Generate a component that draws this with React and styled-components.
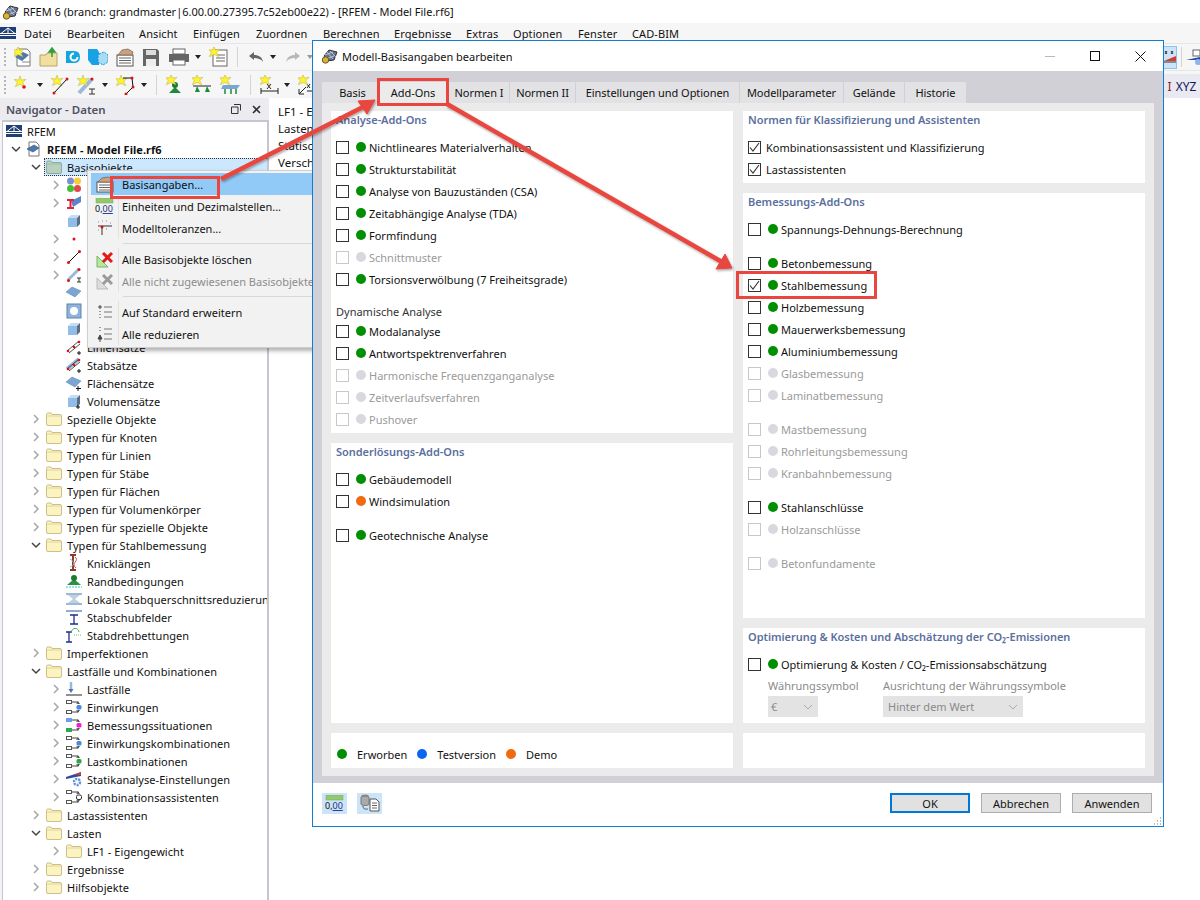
import React from "react";
import styled, { createGlobalStyle, css } from "styled-components";

const UI_FONT = `"Noto Sans", "Open Sans", "Liberation Sans", sans-serif`;
const RED = "#e8463f";

const Global = createGlobalStyle`
  html, body { margin: 0; padding: 0; background: #fff; }
  body { font-family: ${UI_FONT}; font-size: 11px; color: #111; }
  * { box-sizing: border-box; }
`;

const Desktop = styled.div`
  position: relative;
  width: 1200px;
  height: 900px;
  overflow: hidden;
  background: #fff;
`;

/* main window */
const TitleBar = styled.div`
  height: 23px;
  display: flex;
  align-items: center;
  gap: 3px;
  padding-left: 2px;
  font-size: 11px;
  background: #fff;
`;
const MenuBar = styled.div`
  height: 20px;
  display: flex;
  align-items: center;
  gap: 8px;
  background: #f6f6f6;
`;
const MenuEntries = styled.div`
  display: flex;
`;
const MenuEntry = styled.span`
  width: ${(p) => p.$w}px;
  flex: none;
  letter-spacing: 0.1px;
`;
const ToolRow = styled.div`
  height: ${(p) => p.$h}px;
  display: flex;
  align-items: center;
  gap: 8px;
  padding-left: 4px;
  background: #f6f6f6;
  border-top: 1px solid #e6e6e6;
`;
const Grip = styled.span`
  width: 2px;
  height: 18px;
  border-left: 2px dotted #b5b5b5;
`;
const ToolSep = styled.span`
  width: 1px;
  height: 20px;
  margin: 0 1px;
  background: #d4d4d4;
`;
const Caret = styled.span`
  width: 0;
  height: 0;
  margin-left: -3px;
  border-left: 3.5px solid transparent;
  border-right: 3.5px solid transparent;
  border-top: 4px solid ${(p) => (p.$off ? "#999" : "#222")};
`;
const RightTools = styled.div`
  margin-left: auto;
  display: flex;
  align-items: center;
  gap: 3px;
`;
const ActiveTool = styled.span`
  width: 13px;
  height: 23px;
  display: flex;
  align-items: center;
  justify-content: flex-end;
  background: #cce4f7;
  border: 1px solid #8cc4ee;
  border-left: 0;
`;
const XyzLabel = styled.span`
  margin-left: auto;
  align-self: flex-end;
  width: 36px;
  height: 24px;
  display: flex;
  align-items: center;
  justify-content: center;
  gap: 4px;
  font-size: 12px;
  color: #14145a;
  background: #e9e9f1;
`;
const XyzMark = styled.span`
  color: #8a1f2a;
`;
const Body = styled.div`
  display: flex;
  height: 802px;
`;
const Navigator = styled.div`
  width: 269px;
  flex: none;
  background: #f3f3f5;
  display: flex;
  flex-direction: column;
`;
const NavHead = styled.div`
  height: 22px;
  display: flex;
  align-items: center;
  padding: 0 8px 0 6px;
  font-weight: 600;
  font-size: 11.5px;
  color: #4d5160;
  background: #ececf0;
`;
const NavButtons = styled.div`
  margin-left: auto;
  display: flex;
  gap: 11px;
  align-items: center;
`;
const Tree = styled.div`
  flex: 1;
  background: #fff;
  margin-left: 2px;
  border: 2px solid #c6c6d0;
  border-width: 2px 2px 0 1px;
  overflow: hidden;
`;
const TreeRow = styled.div`
  position: relative;
  height: 18px;
  display: flex;
  align-items: center;
  white-space: nowrap;
  padding-left: ${(p) => (p.$level === 0 ? 3 : 3 + 20 * (p.$level - 1))}px;
  font-weight: ${(p) => (p.$bold ? 700 : 400)};
`;
const SelectBand = styled.span`
  position: absolute;
  top: 0;
  bottom: 0;
  left: 41px;
  right: 0;
  background: #cce8ff;
  border: 1px dotted #333;
  border-right: 0;
`;
const Expander = styled.span`
  width: 20px;
  flex: none;
  display: flex;
  justify-content: center;
  position: relative;
`;
const RowIcon = styled.span`
  width: 16px;
  height: 16px;
  flex: none;
  position: relative;
  display: flex;
  align-items: center;
  justify-content: center;
  margin-right: 5px;
`;
const RowText = styled.span`
  position: relative;
  letter-spacing: 0.05px;
`;
const SidePane = styled.div`
  flex: 1;
  margin-left: 3px;
  padding: 5px 0 0 6px;
  background: #fff;
  line-height: 17px;
  font-size: 11.5px;
`;

/* context menu */
const ContextMenu = styled.div`
  position: absolute;
  left: 87px;
  top: 170px;
  width: 240px;
  height: 178px;
  padding: 2px 0 0 3px;
  background: #f2f2f2;
  border: 1px solid #cfcfcf;
  box-shadow: 3px 3px 4px rgba(0, 0, 0, 0.3);
`;
const MenuRow = styled.div`
  height: 22px;
  display: flex;
  align-items: center;
  background: ${(p) => (p.$active ? "#91c9f7" : "transparent")};
  color: ${(p) => (p.$off ? "#8c8c8c" : "#111")};
  white-space: nowrap;
`;
const MenuGutter = styled.span`
  width: 28px;
  height: 100%;
  flex: none;
  display: flex;
  align-items: center;
  justify-content: center;
  border-right: 1px solid ${(p) => (p.$active ? "transparent" : "#e2e2e2")};
`;
const MenuLabel = styled.span`
  position: relative;
  margin-left: 3px;
  ${(p) =>
    p.$marked &&
    css`
      &::after {
        content: "";
        position: absolute;
        left: -12px;
        right: -17px;
        top: -1px;
        bottom: -7px;
        border: 3px solid ${RED};
      }
    `}
`;
const MenuDivider = styled.div`
  height: 9px;
  display: flex;
  align-items: center;
  padding-left: 32px;
  &::after {
    content: "";
    flex: 1;
    height: 1px;
    background: #d8d8d8;
  }
`;

/* dialog */
const Dialog = styled.div`
  position: absolute;
  left: 312px;
  top: 40px;
  width: 852px;
  height: 787px;
  background: #fff;
  border: 1px solid #0f7fd6;
  display: flex;
  flex-direction: column;
`;
const DialogTitle = styled.div`
  height: 30px;
  flex: none;
  display: flex;
  align-items: center;
  padding-left: 8px;
  gap: 3px;
  font-size: 11px;
`;
const WindowButtons = styled.div`
  margin-left: auto;
  display: flex;
  align-items: center;
  gap: 35px;
  padding-right: 17px;
`;
const DialogBody = styled.div`
  height: 712px;
  flex: none;
  padding: 11px 9px 7px;
  background: #d0d0d6;
  display: flex;
  flex-direction: column;
`;
const Tabs = styled.div`
  height: 21px;
  flex: none;
  display: flex;
  gap: 1px;
`;
const Tab = styled.div`
  position: relative;
  width: ${(p) => p.$w}px;
  padding-left: ${(p) => p.$pad || 0}px;
  display: flex;
  align-items: center;
  justify-content: center;
  background: ${(p) => (p.$active ? "#ebebeb" : "#e2e2e4")};
  letter-spacing: -0.05px;
  ${(p) =>
    p.$marked &&
    css`
      &::after {
        content: "";
        position: absolute;
        inset: -4px -1px -3px -1px;
        border: 3px solid ${RED};
      }
    `}
`;
const Panel = styled.div`
  flex: 1;
  background: #ebebeb;
  padding: 8px 9px;
  display: flex;
  gap: 10px;
`;
const Column = styled.div`
  width: 402px;
  display: flex;
  flex-direction: column;
  gap: 10px;
`;
const Card = styled.div`
  height: ${(p) => p.$h}px;
  flex: none;
  background: #fff;
  padding: 1px 5px 0;
`;
const CardTitle = styled.div`
  height: 15px;
  line-height: 15px;
  font-weight: 600;
  color: #5b6f9e;
  margin-bottom: ${(p) => p.$after ?? 9}px;
  letter-spacing: -0.03px;
`;
const SubTitle = styled.div`
  height: 17px;
  margin-top: 13px;
  line-height: 17px;
  color: #333;
  font-size: 11px;
`;
const CheckRow = styled.div`
  position: relative;
  height: 22px;
  width: fit-content;
  margin-top: ${(p) => p.$gap || 0}px;
  display: flex;
  align-items: center;
  white-space: nowrap;
  color: ${(p) => (p.$off ? "#9a9a9a" : "#111")};
  ${(p) =>
    p.$marked &&
    css`
      &::after {
        content: "";
        position: absolute;
        left: -12px;
        right: -10px;
        top: -3px;
        bottom: -3px;
        border: 3px solid ${RED};
      }
    `}
`;
const Box = styled.span`
  width: 13px;
  height: 13px;
  flex: none;
  margin-right: ${(p) => (p.$plain ? 5 : 7)}px;
  border: 1px solid ${(p) => (p.$off ? "#c8c8c8" : "#333")};
  background: #fff;
  display: flex;
  align-items: center;
  justify-content: center;
`;
const Dot = styled.span`
  width: 10px;
  height: 10px;
  flex: none;
  margin-right: ${(p) => p.$after ?? 3}px;
  border-radius: 50%;
  background: ${(p) => p.$color};
`;
const LegendRow = styled.div`
  height: 34px;
  padding: 6px 0 0 1px;
  display: flex;
  align-items: center;
`;
const LegendItem = styled.span`
  margin-right: 10px;
`;
const FieldGrid = styled.div`
  display: flex;
  gap: 65px;
  padding-left: 20px;
  color: #8a8a8a;
`;
const Field = styled.div`
  width: ${(p) => p.$w}px;
`;
const FieldLabel = styled.div`
  height: 21px;
  line-height: 21px;
  white-space: nowrap;
`;
const FakeSelect = styled.div`
  height: 21px;
  display: flex;
  align-items: center;
  justify-content: space-between;
  padding: 0 5px 0 ${(p) => p.$pad || 5}px;
  background: #e3e3e3;
`;
const DialogFooter = styled.div`
  flex: 1;
  position: relative;
  display: flex;
  align-items: center;
  padding: 0 11px 3px 9px;
`;
const FooterTool = styled.span`
  width: 25px;
  height: 21px;
  margin-right: 10px;
  display: flex;
  align-items: center;
  justify-content: center;
  background: #cce4f7;
`;
const FooterActions = styled.div`
  margin-left: auto;
  display: flex;
  gap: 11px;
`;
const Button = styled.div`
  width: 80px;
  height: 20px;
  display: flex;
  align-items: center;
  justify-content: center;
  background: #e1e1e1;
  border: ${(p) => (p.$primary ? "2px solid #0078d7" : "1px solid #adadad")};
`;
const ResizeGrip = styled.svg`
  position: absolute;
  right: 1px;
  bottom: 0;
`;
const ArrowLayer = styled.svg`
  position: absolute;
  inset: 0;
  pointer-events: none;
`;

/* ---- icons ---- */
const Folder = ({ tint }) => (
  <svg width="16" height="14" viewBox="0 0 16 14">
    <path d="M.5 2.500Q.5 1 2 1h3l1 1.500h8q1.500 0 1.500 1.500v8q0 1.500-1.500 1.500H2Q.5 13.500.5 12z" fill={tint ? "#b7d0c0" : "#fbf3c0"} stroke={tint ? "#8fac9b" : "#cdbf85"} />
    <path d="M.8 4h14.400" stroke={tint ? "#9fbcaa" : "#e0d49e"} />
  </svg>
);
const Chevron = ({ open }) => (
  <svg width="10" height="10" viewBox="0 0 10 10">
    <path d={open ? "M1 3l4 4 4-4" : "M3 1l4 4-4 4"} fill="none" stroke={open ? "#444" : "#a6a6a6"} strokeWidth="1.500" />
  </svg>
);
const Star = ({ x = 4, y = 4 }) => (
  <path transform={`translate(${x} ${y}) scale(1.35)`} d="M0-4.500L1-1.400 4.500-2 2 .4 3.500 3.500 0 1.800-3.500 3.500-2 .4-4.500-2-1-1.400z" fill="#fff22e" stroke="#b9b45a" strokeWidth=".4" />
);
const LogoGrid = () => (
  <svg width="18" height="18" viewBox="0 0 18 18">
    <path d="M3 9l5-6 8 2-3 8-7 1z" fill="#66738c" stroke="#333" />
    <path d="M6 5l6 7M9 4l6 6M4 8l8-3M5 12l8-3" stroke="#c8d4e8" strokeWidth=".8" />
    <circle cx="4.500" cy="13" r="3.200" fill="#d9b23a" stroke="#6c5a16" />
  </svg>
);
const NavFlag = () => (
  <svg width="16" height="12" viewBox="0 0 16 12">
    <rect width="16" height="12" fill="#1f3f77" />
    <path d="M0 6.500h16M8 1L1 6.500M8 1l7 5.500M8 1v5.500" stroke="#fff" strokeWidth="1" fill="none" />
    <rect y="8" width="16" height="1" fill="#fff" />
  </svg>
);
const ModelFile = () => (
  <svg width="16" height="16" viewBox="0 0 16 16">
    <path d="M3 1h7l3 3v11H3z" fill="#fff" stroke="#777" />
    <path d="M1 8l7-4 5 3-6 4z" fill="#4b78ad" stroke="#2d4d77" strokeWidth=".6" />
  </svg>
);
const Colors = () => (
  <svg width="16" height="16" viewBox="0 0 16 16">
    <circle cx="4.500" cy="4" r="3.500" fill="#7f8ed0" />
    <circle cx="11.500" cy="4" r="3.500" fill="#f2cf3a" />
    <circle cx="4.500" cy="11.500" r="3.500" fill="#43c02f" />
    <circle cx="11.500" cy="11.500" r="3.500" fill="#e0484b" />
  </svg>
);
const Beam = () => (
  <svg width="16" height="16" viewBox="0 0 16 16">
    <path d="M5 6l10-5v6L7 12z" fill="#5b86c6" />
    <path d="M1 5h7M1 13h7M4.500 5v8" stroke="#e0243a" strokeWidth="2" />
  </svg>
);
const Block = ({ plus }) => (
  <svg width="16" height="16" viewBox="0 0 16 16">
    <path d="M2 5h9v9H2z" fill="#8fbce8" />
    <path d="M2 5l3-3h9l-3 3z" fill="#c5dcf3" />
    <path d="M11 5l3-3v9l-3 3z" fill="#5e6e82" />
    {plus && <path d="M12 12v4M10 14h4" stroke="#111" />}
  </svg>
);
const Slab = ({ plus }) => (
  <svg width="16" height="16" viewBox="0 0 16 16">
    <path d="M0 7l6-5 9 4-6 6z" fill="#7aa6d4" stroke="#5c7fa6" strokeWidth=".5" />
    {plus && <path d="M12 11v5M10 13.500h5" stroke="#111" />}
  </svg>
);
const Node = () => (
  <svg width="16" height="16"><circle cx="8" cy="8" r="1.500" fill="#d11" /></svg>
);
const LineIcon = () => (
  <svg width="16" height="16"><path d="M2 14L14 2" stroke="#111" /><circle cx="2.500" cy="13.500" r="1.500" fill="#d11" /><circle cx="13.500" cy="2.500" r="1.500" fill="#d11" /></svg>
);
const MemberIcon = () => (
  <svg width="16" height="16"><path d="M2 13L13 2" stroke="#9bb9dd" strokeWidth="3" /><circle cx="2.500" cy="13.500" r="1.500" fill="#d11" /><circle cx="13" cy="2.500" r="1.500" fill="#d11" /><path d="M11 11h4M13 11v4M11 15h4" stroke="#333" /></svg>
);
const Opening = () => (
  <svg width="16" height="16"><rect x="1" y="1" width="14" height="14" fill="#8fb3dc" stroke="#5d82ad" /><circle cx="8" cy="8" r="4" fill="#fff" /></svg>
);
const LineSet = ({ member }) => (
  <svg width="16" height="16">
    {member && <path d="M1 12L13 2" stroke="#9bb9dd" strokeWidth="4" />}
    <path d="M1 12L13 2M3 14L14 5" stroke="#222" strokeWidth=".8" />
    <circle cx="2" cy="12" r="1.300" fill="#d11" /><circle cx="8" cy="8" r="1.300" fill="#d11" /><circle cx="13" cy="3" r="1.300" fill="#d11" />
    <path d="M13 12v4M11 14h4" stroke="#111" />
  </svg>
);
const Buckling = () => (
  <svg width="16" height="18" viewBox="0 0 16 18"><path d="M4 1h6M4 16h6M7 1v15" stroke="#8c3b2e" strokeWidth="2" /><path d="M9 3c5 4-5 6 1 11" stroke="#e04a3a" fill="none" /><path d="M4 5c5 3 5 6 0 8" stroke="#7fb4df" fill="none" /></svg>
);
const Support = () => (
  <svg width="16" height="16"><path d="M1 12l7-6 7 6z" fill="#2f8f43" /><circle cx="8" cy="5" r="3" fill="#1c7a33" /><path d="M0 14h16" stroke="#29c9c9" strokeDasharray="2 1" /></svg>
);
const Reduction = () => (
  <svg width="16" height="14"><rect y="1" width="16" height="2" fill="#9fb9d4" /><rect y="11" width="16" height="2" fill="#9fb9d4" /><path d="M2 3h12L9 7l5 4H2l5-4z" fill="#bcd0e4" /></svg>
);
const ShearPanel = () => (
  <svg width="16" height="16"><path d="M0 2h16" stroke="#93aacb" strokeWidth="2" /><path d="M4 6h8M8 6v9M4 15h8" stroke="#1b2f8a" strokeWidth="1.300" /></svg>
);
const Rotary = () => (
  <svg width="16" height="16"><path d="M0 5h6M3 5v10M0 15h6" stroke="#1b2f8a" strokeWidth="1.300" /><path d="M5 6c1-6 7-6 8-1" stroke="#4da852" fill="none" /><path d="M8 8h8" stroke="#7ac27d" strokeDasharray="1 1" /></svg>
);
const LoadCase = () => (
  <svg width="16" height="16"><path d="M5 1v8" stroke="#9ab8db" strokeWidth="2.500" /><path d="M2.500 8h5L5 12z" fill="#4a74b0" /><path d="M0 14h16" stroke="#222" /></svg>
);
const Combo = ({ c1 = "#fff", c2 = "#fff", c3 = "#4d86dd" }) => (
  <svg width="16" height="16">
    <rect x=".5" y="1.500" width="5" height="3" fill={c1} stroke={c1 === "#fff" ? "#555" : c1} />
    <rect x=".5" y="11.500" width="5" height="3" fill={c2} stroke={c2 === "#fff" ? "#555" : c2} />
    <path d="M6 3h6l1 2M6 13h6l1-2" stroke="#444" fill="none" />
    <path d="M10 5l4 0-2-3zM10 11l4 0-2 3z" fill="#444" opacity=".7" />
    <rect x="10.500" y="6" width="5" height="4.500" rx="1.500" fill={c3} stroke={c3 === "#fff" ? "#333" : "none"} />
  </svg>
);
const Analysis = () => (
  <svg width="16" height="16"><path d="M0 6l15-5v4L0 8z" fill="#2b4aa0" /><path d="M8 4l7-3v3z" fill="#d93a2f" /><circle cx="11" cy="11" r="3" fill="none" stroke="#5f8fe0" strokeWidth="2.500" strokeDasharray="2 1" /></svg>
);
const Ruler = () => (
  <svg width="19" height="16" viewBox="0 0 19 16">
    <rect x="1" y="0" width="17" height="5" fill="#92c96e" stroke="#7aa85a" strokeWidth=".5" />
    <text x="0" y="14" fontSize="9" fontFamily={UI_FONT} fill="#111">0,<tspan fill="#1b2f8a" textDecoration="underline">00</tspan></text>
  </svg>
);
const Clipboard = () => (
  <svg width="18" height="17" viewBox="0 0 18 17">
    <rect x="1" y="6" width="16" height="10" fill="#fff" stroke="#555" />
    <path d="M3 9h12M3 11.500h12M3 14h12" stroke="#666" />
    <path d="M2 6l4-4 6-1 4 2-1 3z" fill="#c9a182" stroke="#7a5c45" strokeWidth=".7" />
  </svg>
);
const Tolerance = () => (
  <svg width="16" height="16"><path d="M5 15V6M1 6h14" stroke="#333" /><circle cx="5" cy="7" r="1.500" fill="#d11" /><path d="M1 2h1M5 1h1M9 1h1M13 3h1M1 10h1M9 9h1" stroke="#888" /></svg>
);
const DeleteIcon = ({ off }) => (
  <svg width="17" height="17"><path d="M1 16V5l11 11z" fill={off ? "#dcdcdc" : "#b7e8a0"} stroke={off ? "#bbb" : "#79b45f"} /><path d="M7 2l9 9M16 2l-9 9" stroke={off ? "#9a9a9a" : "#e01919"} strokeWidth="3" /></svg>
);
const ExpandIcon = ({ down }) => (
  <svg width="16" height="16">
    <path d="M7 3h8M7 8h8M7 13h8" stroke="#777" />
    {down ? <path d="M3 1v1M3 4v1M1 13L3 9l2 4zM3 13v3" stroke="#444" fill="#444" /> : <path d="M3 1v4M1 3h4M3 7v1M3 10v1M3 13v1" stroke="#444" />}
  </svg>
);
const DbCopy = () => (
  <svg width="20" height="18" viewBox="0 0 20 18">
    <ellipse cx="5" cy="2.500" rx="4" ry="2" fill="#888" />
    <path d="M1 3v7c0 2 8 2 8 0V3" fill="#aaa" stroke="#777" />
    <path d="M3 12c0 4 3 3 5 3" stroke="#555" fill="none" />
    <path d="M10 5h6l3 3v9h-9z" fill="#fff" stroke="#555" />
    <path d="M12 9h5M12 11.500h5M12 14h5" stroke="#666" />
  </svg>
);

/* toolbar glyphs */
const ToolNew = () => (<svg width="17" height="20"><path d="M3 2h10l3 3v14H3z" fill="#fff" stroke="#777" /><path d="M1 10l8-5 6 3-7 6z" fill="#4b78ad" /><path d="M8 15h8" stroke="#888" /><Star x={4} y={5} /></svg>);
const ToolOpen = () => (<svg width="19" height="20"><path d="M1 8h6l1-2h10v13H1z" fill="#f0df9e" stroke="#b9a566" /><path d="M13 10V3M10 5l3-4 3 4z" fill="#2f9e3f" stroke="#2f9e3f" strokeWidth="1.500" /></svg>);
const ToolC = () => (<svg width="14" height="20"><path d="M0 4h8q6 0 6 6t-6 6H0z" fill="#12a5e0" /><circle cx="8" cy="10" r="3.500" fill="none" stroke="#fff" strokeWidth="2" strokeDasharray="16 6" /></svg>);
const ToolCube = () => (<svg width="20" height="20"><path d="M0 2h9l2 3v13H4l-4-5z" fill="#19a1e5" /><path d="M11 7l5-2 4 3v7l-5 3-5-3V9z" fill="#a8dcf5" stroke="#1691d4" strokeDasharray="2 1" /></svg>);
const ToolHand = () => (<svg width="18" height="20"><rect x="1" y="8" width="16" height="11" fill="#fff" stroke="#555" /><path d="M3 11h12M3 13.500h12M3 16h12" stroke="#666" /><path d="M2 8l4-5 6-1 5 3-1 3z" fill="#c9a182" stroke="#7a5c45" strokeWidth=".7" /></svg>);
const ToolSave = () => (<svg width="18" height="20"><path d="M1 2h14l2 2v15H1z" fill="#666" /><rect x="4" y="3" width="10" height="5" fill="#ddd" /><rect x="4" y="12" width="10" height="7" fill="#eee" /></svg>);
const ToolPrint = () => (<svg width="22" height="20"><rect x="5" y="2" width="12" height="5" fill="#fff" stroke="#666" /><rect x="1" y="7" width="20" height="8" fill="#666" /><rect x="5" y="13" width="12" height="5" fill="#fff" stroke="#666" /></svg>);
const ToolReport = () => (<svg width="19" height="20"><rect x="4" y="3" width="14" height="16" fill="#fff" stroke="#666" /><path d="M7 8h9M7 11h9M7 14h9" stroke="#666" /><Star x={5} y={5} /></svg>);
const ToolUndo = ({ off }) => (<svg width="18" height="20"><path d="M2 9l5-4v3c5 0 8 2 9 7-2-3-5-4-9-4v2z" fill={off ? "#b8b8b8" : "#666"} transform={off ? "matrix(-1 0 0 1 18 0)" : undefined} /></svg>);
const StarDot = () => (<svg width="18" height="20"><Star x={6} y={7} /><circle cx="10" cy="12" r="1.800" fill="#d11" /></svg>);
const StarLine = () => (<svg width="18" height="20"><Star x={6} y={6} /><path d="M3 18L16 4" stroke="#111" /><circle cx="3" cy="18" r="1.500" fill="#d11" /><circle cx="16" cy="4" r="1.500" fill="#d11" /></svg>);
const StarMember = () => (<svg width="20" height="20"><path d="M2 18L15 4" stroke="#9bb9dd" strokeWidth="4" /><Star x={6} y={6} /><circle cx="15" cy="4" r="1.500" fill="#d11" /><path d="M12 14h6M15 14v5M12 19h6" stroke="#333" /></svg>);
const StarPoly = () => (<svg width="20" height="20"><Star x={5} y={6} /><path d="M7 3h9l1 9-7 7" stroke="#111" fill="none" /><circle cx="16" cy="3" r="1.500" fill="#d11" /><circle cx="17" cy="12" r="1.500" fill="#d11" /><circle cx="10" cy="19" r="1.500" fill="#d11" /></svg>);
const StarSupport = () => (<svg width="18" height="20"><path d="M3 18l6-6 6 6z" fill="#1c8a3a" /><circle cx="9" cy="10" r="3" fill="#1c7a33" /><Star x={5} y={5} /></svg>);
const StarHinge = () => (<svg width="20" height="20"><path d="M1 11h18" stroke="#222" /><path d="M3 17l2-6 3 6zM13 17l2-6 3 6z" fill="#1c8a3a" /><Star x={5} y={5} /></svg>);
const StarDeck = () => (<svg width="21" height="20"><path d="M3 10h17l-3 4H1z" fill="#7aa6d4" /><path d="M5 14v5M11 14v5M16 14v5" stroke="#1c8a3a" strokeWidth="1.500" /><Star x={5} y={5} /></svg>);
const StarDim = () => (<svg width="19" height="20"><path d="M1 13v6M18 13v6M1 16h17" stroke="#222" /><path d="M7 9l4 5M11 9l-4 5" stroke="#222" /><Star x={5} y={5} /></svg>);
const StarDimXX = () => (<svg width="19" height="20"><path d="M1 19L8 12M1 19h5M1 19v-5M9 16h9" stroke="#222" /><path d="M9 9l3 4M12 9l-3 4M15 9l3 4M18 9l-3 4" stroke="#222" /><Star x={5} y={5} /></svg>);
const ToolXxWedge = () => (<svg width="12" height="16"><path d="M1 2l2 3M3 2L1 5M7 2l2 3M9 2L7 5" stroke="#333" /><path d="M0 12l12-5v5z" fill="#d93a2f" /><path d="M0 13h12" stroke="#333" /></svg>);
const ToolGear = () => (<svg width="14" height="20"><rect x="7" y="3" width="7" height="6" fill="#fff" stroke="#666" /><path d="M0 13l14-3v3z" fill="#2b4aa0" /><circle cx="12" cy="15" r="3" fill="#8fb4ec" /></svg>);

const icons = {
  folder: <Folder />,
  folderSel: <Folder tint />,
  flag: <NavFlag />,
  model: <ModelFile />,
  colors: <Colors />,
  beam: <Beam />,
  block: <Block />,
  node: <Node />,
  line: <LineIcon />,
  member: <MemberIcon />,
  slab: <Slab />,
  opening: <Opening />,
  lineSet: <LineSet />,
  memberSet: <LineSet member />,
  slabSet: <Slab plus />,
  blockSet: <Block plus />,
  buckling: <Buckling />,
  support: <Support />,
  reduction: <Reduction />,
  shear: <ShearPanel />,
  rotary: <Rotary />,
  loadCase: <LoadCase />,
  action: <Combo />,
  design: <Combo c1="#6a9ee8" c2="#2fa84f" c3="#ee1fd1" />,
  actionCombo: <Combo />,
  loadCombo: <Combo c3="#2aa842" />,
  analysis: <Analysis />,
  wizard: <Combo c3="#fff" />,
};

const treeRows = [
  { level: 0, icon: "flag", label: "RFEM" },
  { level: 1, open: true, icon: "model", label: "RFEM - Model File.rf6", bold: true },
  { level: 2, open: true, icon: "folderSel", label: "Basisobjekte", selected: true },
  { level: 3, closed: true, icon: "colors", label: "Materialien" },
  { level: 3, closed: true, icon: "beam", label: "Querschnitte" },
  { level: 3, icon: "block", label: "Dicken" },
  { level: 3, closed: true, icon: "node", label: "Knoten" },
  { level: 3, closed: true, icon: "line", label: "Linien" },
  { level: 3, closed: true, icon: "member", label: "Stäbe" },
  { level: 3, icon: "slab", label: "Flächen" },
  { level: 3, icon: "opening", label: "Öffnungen" },
  { level: 3, icon: "block", label: "Volumenkörper" },
  { level: 3, icon: "lineSet", label: "Liniensätze" },
  { level: 3, icon: "memberSet", label: "Stabsätze" },
  { level: 3, icon: "slabSet", label: "Flächensätze" },
  { level: 3, icon: "blockSet", label: "Volumensätze" },
  { level: 2, closed: true, icon: "folder", label: "Spezielle Objekte" },
  { level: 2, closed: true, icon: "folder", label: "Typen für Knoten" },
  { level: 2, closed: true, icon: "folder", label: "Typen für Linien" },
  { level: 2, closed: true, icon: "folder", label: "Typen für Stäbe" },
  { level: 2, closed: true, icon: "folder", label: "Typen für Flächen" },
  { level: 2, closed: true, icon: "folder", label: "Typen für Volumenkörper" },
  { level: 2, closed: true, icon: "folder", label: "Typen für spezielle Objekte" },
  { level: 2, open: true, icon: "folder", label: "Typen für Stahlbemessung" },
  { level: 3, icon: "buckling", label: "Knicklängen" },
  { level: 3, icon: "support", label: "Randbedingungen" },
  { level: 3, icon: "reduction", label: "Lokale Stabquerschnittsreduzierungen" },
  { level: 3, icon: "shear", label: "Stabschubfelder" },
  { level: 3, icon: "rotary", label: "Stabdrehbettungen" },
  { level: 2, closed: true, icon: "folder", label: "Imperfektionen" },
  { level: 2, open: true, icon: "folder", label: "Lastfälle und Kombinationen" },
  { level: 3, closed: true, icon: "loadCase", label: "Lastfälle" },
  { level: 3, closed: true, icon: "action", label: "Einwirkungen" },
  { level: 3, closed: true, icon: "design", label: "Bemessungssituationen" },
  { level: 3, closed: true, icon: "actionCombo", label: "Einwirkungskombinationen" },
  { level: 3, closed: true, icon: "loadCombo", label: "Lastkombinationen" },
  { level: 3, closed: true, icon: "analysis", label: "Statikanalyse-Einstellungen" },
  { level: 3, closed: true, icon: "wizard", label: "Kombinationsassistenten" },
  { level: 2, closed: true, icon: "folder", label: "Lastassistenten" },
  { level: 2, open: true, icon: "folder", label: "Lasten" },
  { level: 3, closed: true, icon: "folder", label: "LF1 - Eigengewicht" },
  { level: 2, closed: true, icon: "folder", label: "Ergebnisse" },
  { level: 2, closed: true, icon: "folder", label: "Hilfsobjekte" },
];

const menuEntries = [
  ["Datei", 43], ["Bearbeiten", 72], ["Ansicht", 54], ["Einfügen", 63], ["Zuordnen", 67],
  ["Berechnen", 71], ["Ergebnisse", 72], ["Extras", 47], ["Optionen", 65], ["Fenster", 54], ["CAD-BIM", 60],
];

const tabs = [
  ["Basis", 55, 6], ["Add-Ons", 70], ["Normen I", 60], ["Normen II", 65], ["Einstellungen und Optionen", 163],
  ["Modellparameter", 103], ["Gelände", 60], ["Historie", 61],
];

const GREEN = "#008f00";
const CHECK = (
  <svg width="11" height="11" viewBox="0 0 11 11"><path d="M1 5.500l3 3.500 6-8" fill="none" stroke="#333" strokeWidth="1.100" /></svg>
);

const AddOn = ({ label, off, checked, gap, plain, color, marked }) => (
  <CheckRow $off={off} $gap={gap} $marked={marked}>
    <Box $off={off} $plain={plain}>{checked && CHECK}</Box>
    {!plain && <Dot $color={color || (off ? "#d8d8de" : GREEN)} />}
    <span>{label}</span>
  </CheckRow>
);

const SmallChevron = () => (
  <svg width="10" height="6" viewBox="0 0 10 6"><path d="M1 1l4 4 4-4" fill="none" stroke="#aaa" /></svg>
);

export default function App() {
  return (
    <Desktop>
      <Global />
      <TitleBar>
        <LogoGrid />
        <span>RFEM 6 (branch: grandmaster|6.00.00.27395.7c52eb00e22) - [RFEM - Model File.rf6]</span>
      </TitleBar>
      <MenuBar>
        <NavFlag />
        <MenuEntries>
          {menuEntries.map(([label, w]) => (
            <MenuEntry key={label} $w={w}>{label}</MenuEntry>
          ))}
        </MenuEntries>
      </MenuBar>
      <ToolRow $h={27}>
        <Grip />
        <ToolNew /><ToolOpen /><ToolC /><ToolCube /><ToolHand /><ToolSave /><ToolPrint /><Caret />
        <ToolReport /><ToolSep /><ToolUndo /><Caret /><ToolUndo off /><Caret $off />
        <RightTools>
          <ActiveTool><ToolXxWedge /></ActiveTool>
          <ToolSep />
          <ToolGear />
        </RightTools>
      </ToolRow>
      <ToolRow $h={28}>
        <Grip />
        <StarDot /><Caret /><StarLine /><StarMember /><Caret /><StarPoly /><Caret />
        <ToolSep /><StarSupport /><StarHinge /><StarDeck /><ToolSep /><StarDim /><Caret /><StarDimXX />
        <XyzLabel><XyzMark>I</XyzMark>XYZ</XyzLabel>
      </ToolRow>
      <Body>
        <Navigator>
          <NavHead>
            Navigator - Daten
            <NavButtons>
              <svg width="10" height="10"><path d="M3 .5h6.500v6M.5 3h6.500v6.500H.5z" fill="none" stroke="#333" /></svg>
              <svg width="9" height="9"><path d="M1 1l7 7M8 1l-7 7" stroke="#333" strokeWidth="1.600" /></svg>
            </NavButtons>
          </NavHead>
          <Tree>
            {treeRows.map((row) => (
              <TreeRow key={row.label} $level={row.level} $bold={row.bold}>
                {row.selected && <SelectBand />}
                {row.level > 0 && (
                  <Expander>
                    {row.open && <Chevron open />}
                    {row.closed && <Chevron />}
                  </Expander>
                )}
                <RowIcon>{icons[row.icon]}</RowIcon>
                <RowText>{row.label}</RowText>
              </TreeRow>
            ))}
          </Tree>
        </Navigator>
        <SidePane>
          LF1 - Eigengewicht<br />Lasten<br />Statische Analyse<br />Verschiebungen
        </SidePane>
      </Body>

      <ContextMenu>
        <MenuRow $active>
          <MenuGutter $active><Clipboard /></MenuGutter>
          <MenuLabel $marked>Basisangaben...</MenuLabel>
        </MenuRow>
        <MenuRow>
          <MenuGutter><Ruler /></MenuGutter>
          <MenuLabel>Einheiten und Dezimalstellen...</MenuLabel>
        </MenuRow>
        <MenuRow>
          <MenuGutter><Tolerance /></MenuGutter>
          <MenuLabel>Modelltoleranzen...</MenuLabel>
        </MenuRow>
        <MenuDivider />
        <MenuRow>
          <MenuGutter><DeleteIcon /></MenuGutter>
          <MenuLabel>Alle Basisobjekte löschen</MenuLabel>
        </MenuRow>
        <MenuRow $off>
          <MenuGutter><DeleteIcon off /></MenuGutter>
          <MenuLabel>Alle nicht zugewiesenen Basisobjekte löschen</MenuLabel>
        </MenuRow>
        <MenuDivider />
        <MenuRow>
          <MenuGutter><ExpandIcon /></MenuGutter>
          <MenuLabel>Auf Standard erweitern</MenuLabel>
        </MenuRow>
        <MenuRow>
          <MenuGutter><ExpandIcon down /></MenuGutter>
          <MenuLabel>Alle reduzieren</MenuLabel>
        </MenuRow>
      </ContextMenu>

      <Dialog>
        <DialogTitle>
          <LogoGrid />
          <span>Modell-Basisangaben bearbeiten</span>
          <WindowButtons>
            <svg width="10" height="10"><path d="M0 5.500h10" stroke="#bbb" /></svg>
            <svg width="10" height="10"><rect x=".5" y=".5" width="9" height="9" fill="none" stroke="#111" /></svg>
            <svg width="11" height="11"><path d="M.5.5l10 10M10.500.5l-10 10" stroke="#111" /></svg>
          </WindowButtons>
        </DialogTitle>
        <DialogBody>
          <Tabs>
            {tabs.map(([label, w, pad]) => (
              <Tab key={label} $w={w} $pad={pad} $active={label === "Add-Ons"} $marked={label === "Add-Ons"}>{label}</Tab>
            ))}
          </Tabs>
          <Panel>
            <Column>
              <Card $h={322}>
                <CardTitle>Analyse-Add-Ons</CardTitle>
                <AddOn label="Nichtlineares Materialverhalten" />
                <AddOn label="Strukturstabilität" />
                <AddOn label="Analyse von Bauzuständen (CSA)" />
                <AddOn label="Zeitabhängige Analyse (TDA)" />
                <AddOn label="Formfindung" />
                <AddOn label="Schnittmuster" off />
                <AddOn label="Torsionsverwölbung (7 Freiheitsgrade)" />
                <SubTitle>Dynamische Analyse</SubTitle>
                <AddOn label="Modalanalyse" />
                <AddOn label="Antwortspektrenverfahren" />
                <AddOn label="Harmonische Frequenzganganalyse" off />
                <AddOn label="Zeitverlaufsverfahren" off />
                <AddOn label="Pushover" off />
              </Card>
              <Card $h={280}>
                <CardTitle>Sonderlösungs-Add-Ons</CardTitle>
                <AddOn label="Gebäudemodell" />
                <AddOn label="Windsimulation" color="#f26a0f" />
                <AddOn label="Geotechnische Analyse" gap={12} />
              </Card>
              <Card $h={35}>
                <LegendRow>
                  <Dot $color={GREEN} $after={10} /><LegendItem>Erworben</LegendItem>
                  <Dot $color="#0a66f2" $after={10} /><LegendItem>Testversion</LegendItem>
                  <Dot $color="#f26a0f" $after={10} /><LegendItem>Demo</LegendItem>
                </LegendRow>
              </Card>
            </Column>
            <Column>
              <Card $h={72}>
                <CardTitle>Normen für Klassifizierung und Assistenten</CardTitle>
                <AddOn label="Kombinationsassistent und Klassifizierung" checked plain />
                <AddOn label="Lastassistenten" checked plain />
              </Card>
              <Card $h={425}>
                <CardTitle>Bemessungs-Add-Ons</CardTitle>
                <AddOn label="Spannungs-Dehnungs-Berechnung" />
                <AddOn label="Betonbemessung" gap={12} />
                <AddOn label="Stahlbemessung" checked marked />
                <AddOn label="Holzbemessung" />
                <AddOn label="Mauerwerksbemessung" />
                <AddOn label="Aluminiumbemessung" />
                <AddOn label="Glasbemessung" off />
                <AddOn label="Laminatbemessung" off />
                <AddOn label="Mastbemessung" off gap={12} />
                <AddOn label="Rohrleitungsbemessung" off />
                <AddOn label="Kranbahnbemessung" off />
                <AddOn label="Stahlanschlüsse" gap={12} />
                <AddOn label="Holzanschlüsse" off />
                <AddOn label="Betonfundamente" off gap={12} />
              </Card>
              <Card $h={95}>
                <CardTitle>Optimierung &amp; Kosten und Abschätzung der CO₂-Emissionen</CardTitle>
                <AddOn label="Optimierung & Kosten / CO₂-Emissionsabschätzung" />
                <FieldGrid>
                  <Field $w={50}>
                    <FieldLabel>Währungssymbol</FieldLabel>
                    <FakeSelect $pad={3}>€<SmallChevron /></FakeSelect>
                  </Field>
                  <Field $w={140}>
                    <FieldLabel>Ausrichtung der Währungssymbole</FieldLabel>
                    <FakeSelect>Hinter dem Wert<SmallChevron /></FakeSelect>
                  </Field>
                </FieldGrid>
              </Card>
              <Card $h={35} />
            </Column>
          </Panel>
        </DialogBody>
        <DialogFooter>
          <FooterTool><Ruler /></FooterTool>
          <FooterTool><DbCopy /></FooterTool>
          <FooterActions>
            <Button $primary>OK</Button>
            <Button>Abbrechen</Button>
            <Button>Anwenden</Button>
          </FooterActions>
          <ResizeGrip width="9" height="9" viewBox="0 0 9 9">
            <path d="M7 1h1M4 4h1M7 4h1M1 7h1M4 7h1M7 7h1" stroke="#bdbdbd" strokeWidth="2" />
          </ResizeGrip>
        </DialogFooter>
      </Dialog>

      <ArrowLayer width="1200" height="900" viewBox="0 0 1200 900">
        <defs>
          <filter id="arrowShadow" x="-10%" y="-10%" width="120%" height="120%">
            <feDropShadow dx="1" dy="1.500" stdDeviation="1.200" floodColor="#000" floodOpacity=".35" />
          </filter>
        </defs>
        <g filter="url(#arrowShadow)" fill={RED} stroke={RED}>
          <path d="M221 179L363 107" strokeWidth="4.500" />
          <path d="M375 100L358 101L367 114z" strokeWidth="1" />
          <path d="M447 104L722 262" strokeWidth="4.500" />
          <path d="M732 268L725 254L716 269z" strokeWidth="1" />
        </g>
      </ArrowLayer>
    </Desktop>
  );
}
